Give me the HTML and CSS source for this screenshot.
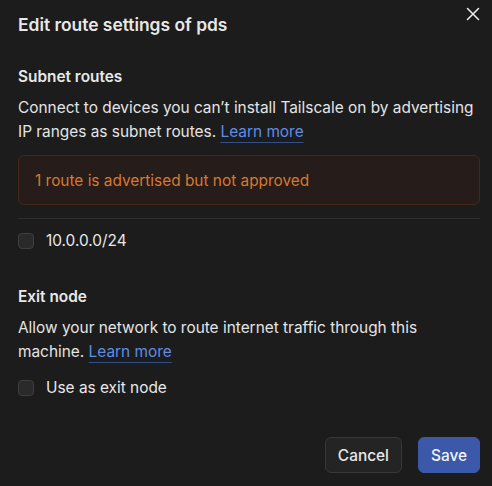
FILE: index.html
```html
<!DOCTYPE html>
<html lang="en">
<head>
    <meta charset="UTF-8">
    <meta name="viewport" content="width=device-width, initial-scale=1.0">
    <title>Edit route settings</title>
    <link rel="stylesheet" href="styles.css">
</head>
<body>
    <div class="dialog">
        <button class="close" aria-label="Close">
            <svg width="16" height="16" viewBox="0 0 16 16"><path d="M2.5 2.5l11 11M13.5 2.5l-11 11" stroke="currentColor" stroke-width="1.6" stroke-linecap="round"/></svg>
        </button>
        <h1 class="title">Edit route settings of pds</h1>

        <section class="section">
            <h2 class="heading">Subnet routes</h2>
            <p class="text">Connect to devices you can’t install Tailscale on by advertising IP ranges as subnet routes. <a href="#" class="link">Learn more</a></p>
            <div class="alert">1 route is advertised but not approved</div>
            <div class="divider"></div>
            <label class="check"><span class="box"></span>10.0.0.0/24</label>
        </section>

        <section class="section exit">
            <h2 class="heading">Exit node</h2>
            <p class="text">Allow your network to route internet traffic through this machine. <a href="#" class="link">Learn more</a></p>
            <label class="check"><span class="box"></span>Use as exit node</label>
        </section>

        <div class="actions">
            <button class="btn cancel">Cancel</button>
            <button class="btn save">Save</button>
        </div>
    </div>
</body>
</html>
```

FILE: styles.css
```css
*{padding: 0;margin: 0;box-sizing: border-box;}
html,body{background: #1c1c1c;}
body{font-family: Inter, "Noto Sans", sans-serif;color: #e8e8e8;width: 492px;height: 486px;overflow: hidden;}
.dialog{position: relative;padding: 14px 12px 13px 18px;height: 486px;display: flex;flex-direction: column;}
.close{position: absolute;top: 6px;right: 11px;background: none;border: 0;color: #e8e8e8;width: 16px;height: 16px;}
.close svg{display: block;}
.title{font-size: 17.4px;font-weight: 600;line-height: 22px;}
.section{margin-top: 31px;}
.heading{font-size: 15.4px;font-weight: 600;line-height: 20px;}
.text{font-size: 15.4px;line-height: 24px;margin-top: 9px;color: #e4e4e4;}
.link{color: #5f8ce6;text-decoration: underline;text-decoration-color: #34508a;text-underline-offset: 5px;text-decoration-thickness: 1px;}
.alert{margin-top: 11px;height: 50px;border: 1px solid #462819;border-radius: 6px;background: #261c19;color: #d9782f;font-size: 15.4px;padding: 0 16px;display: flex;align-items: center;}
.divider{height: 1px;background: #2e2e2e;margin-top: 13px;}
.check{display: flex;align-items: center;font-size: 15.4px;line-height: 20px;margin-top: 12px;}
.box{width: 16px;height: 16px;border: 1px solid #3e3e3e;background: #2a2a2a;border-radius: 4px;margin-right: 12px;}
.exit{margin-top: 36px;}
.exit .check{margin-top: 14px;}
.actions{margin-top: auto;display: flex;justify-content: flex-end;gap: 16px;}
.btn{font-family: inherit;font-size: 15.4px;font-weight: 500;height: 36px;border-radius: 6px;padding: 0 12px;}
.cancel{background: #242424;border: 1px solid #383838;color: #e8e8e8;}
.save{background: #3b58a9;border: 1px solid #3b58a9;color: #f2f4fa;}
```
